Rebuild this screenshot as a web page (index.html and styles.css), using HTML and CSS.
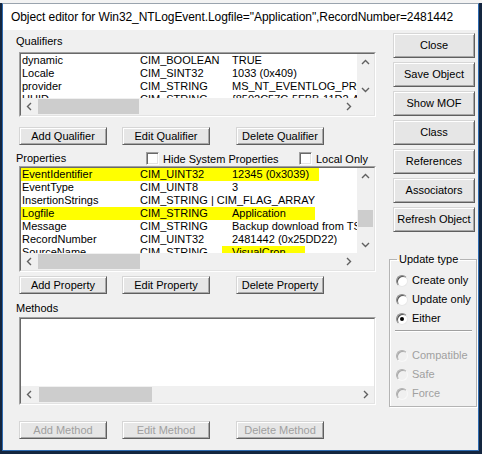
FILE: index.html
```html
<!DOCTYPE html>
<html>
<head>
<meta charset="utf-8">
<link rel="stylesheet" href="styles.css">
</head>
<body>
<div class="window">
  <div class="titlebar">Object editor for Win32_NTLogEvent.Logfile="Application",RecordNumber=2481442</div>
  <div class="client">
    <div class="main">
      <div class="label lbl-q">Qualifiers</div>
      <div class="list list-q">
        <div class="list-in">
          <div class="rows">
            <div class="row"><span class="c1">dynamic</span><span class="c2">CIM_BOOLEAN</span><span class="c3">TRUE</span></div>
            <div class="row"><span class="c1">Locale</span><span class="c2">CIM_SINT32</span><span class="c3">1033 (0x409)</span></div>
            <div class="row"><span class="c1">provider</span><span class="c2">CIM_STRING</span><span class="c3">MS_NT_EVENTLOG_PROVIDER</span></div>
            <div class="row"><span class="c1">UUID</span><span class="c2">CIM_STRING</span><span class="c3">{8502C57C-5FBB-11D2-AAC1-006008C78BC7}</span></div>
          </div>
          <div class="vscroll">
            <div class="arrow"><svg width="17" height="17" viewBox="0 0 17 17"><polyline points="5,10 8.5,6.5 12,10" fill="none" stroke="#606060" stroke-width="1.4"/></svg></div>
            <div class="track"></div>
            <div class="arrow"><svg width="17" height="17" viewBox="0 0 17 17"><polyline points="5,7 8.5,10.5 12,7" fill="none" stroke="#606060" stroke-width="1.4"/></svg></div>
          </div>
          <div class="hscroll">
            <div class="arrow"><svg width="17" height="17" viewBox="0 0 17 17"><polyline points="10,5 6.5,8.5 10,12" fill="none" stroke="#606060" stroke-width="1.4"/></svg></div>
            <div class="hthumb thumb-q"></div>
            <div class="track"></div>
            <div class="arrow"><svg width="17" height="17" viewBox="0 0 17 17"><polyline points="7,5 10.5,8.5 7,12" fill="none" stroke="#606060" stroke-width="1.4"/></svg></div>
          </div>
          <div class="corner"></div>
        </div>
      </div>
      <div class="btnrow btnrow-q">
        <div class="btn">Add Qualifier</div>
        <div class="btn">Edit Qualifier</div>
        <div class="btn">Delete Qualifier</div>
      </div>
      <div class="hdr">
        <div class="label lbl-p">Properties</div>
        <div class="cbitem cb-hide"><span class="cbox"></span><span>Hide System Properties</span></div>
        <div class="cbitem"><span class="cbox"></span><span>Local Only</span></div>
      </div>
      <div class="list list-p">
        <div class="list-in">
          <div class="rows">
            <div class="row hl-a"><span class="c1">EventIdentifier</span><span class="c2">CIM_UINT32</span><span class="c3">12345 (0x3039)</span></div>
            <div class="row"><span class="c1">EventType</span><span class="c2">CIM_UINT8</span><span class="c3">3</span></div>
            <div class="row"><span class="c1">InsertionStrings</span><span class="c2">CIM_STRING | CIM_FLAG_ARRAY</span><span class="c3"></span></div>
            <div class="row hl-b"><span class="c1">Logfile</span><span class="c2">CIM_STRING</span><span class="c3">Application</span></div>
            <div class="row"><span class="c1">Message</span><span class="c2">CIM_STRING</span><span class="c3">Backup download from TSI server</span></div>
            <div class="row"><span class="c1">RecordNumber</span><span class="c2">CIM_UINT32</span><span class="c3">2481442 (0x25DD22)</span></div>
            <div class="row hl-c"><span class="c1">SourceName</span><span class="c2">CIM_STRING</span><span class="c3">VisualCron</span></div>
          </div>
          <div class="vscroll">
            <div class="arrow"><svg width="17" height="17" viewBox="0 0 17 17"><polyline points="5,10 8.5,6.5 12,10" fill="none" stroke="#606060" stroke-width="1.4"/></svg></div>
            <div class="track vtrack-p"><div class="vthumb"></div></div>
            <div class="arrow"><svg width="17" height="17" viewBox="0 0 17 17"><polyline points="5,7 8.5,10.5 12,7" fill="none" stroke="#606060" stroke-width="1.4"/></svg></div>
          </div>
          <div class="hscroll">
            <div class="arrow"><svg width="17" height="17" viewBox="0 0 17 17"><polyline points="10,5 6.5,8.5 10,12" fill="none" stroke="#606060" stroke-width="1.4"/></svg></div>
            <div class="hthumb thumb-p"></div>
            <div class="track"></div>
            <div class="arrow"><svg width="17" height="17" viewBox="0 0 17 17"><polyline points="7,5 10.5,8.5 7,12" fill="none" stroke="#606060" stroke-width="1.4"/></svg></div>
          </div>
          <div class="corner"></div>
        </div>
      </div>
      <div class="btnrow btnrow-p">
        <div class="btn">Add Property</div>
        <div class="btn">Edit Property</div>
        <div class="btn">Delete Property</div>
      </div>
      <div class="label lbl-m">Methods</div>
      <div class="list list-m">
        <div class="list-in list-in-m">
          <div class="rows"></div>
          <div class="hscroll">
            <div class="arrow"><svg width="17" height="17" viewBox="0 0 17 17"><polyline points="10,5 6.5,8.5 10,12" fill="none" stroke="#606060" stroke-width="1.4"/></svg></div>
            <div class="hthumb thumb-m"></div>
            <div class="track"></div>
            <div class="arrow"><svg width="17" height="17" viewBox="0 0 17 17"><polyline points="7,5 10.5,8.5 7,12" fill="none" stroke="#606060" stroke-width="1.4"/></svg></div>
          </div>
        </div>
      </div>
      <div class="btnrow btnrow-m">
        <div class="btn disabled">Add Method</div>
        <div class="btn disabled">Edit Method</div>
        <div class="btn disabled">Delete Method</div>
      </div>
    </div>
    <div class="side">
      <div class="btn sbtn">Close</div>
      <div class="btn sbtn">Save Object</div>
      <div class="btn sbtn">Show MOF</div>
      <div class="btn sbtn">Class</div>
      <div class="btn sbtn">References</div>
      <div class="btn sbtn">Associators</div>
      <div class="btn sbtn">Refresh Object</div>
      <fieldset class="group">
        <legend>Update type</legend>
        <div class="radio r-first"><span class="rdot"></span><span>Create only</span></div>
        <div class="radio"><span class="rdot"></span><span>Update only</span></div>
        <div class="radio"><span class="rdot checked"></span><span>Either</span></div>
        <div class="sep"></div>
        <div class="radio dis r-dis1"><span class="rdot"></span><span>Compatible</span></div>
        <div class="radio dis"><span class="rdot"></span><span>Safe</span></div>
        <div class="radio dis"><span class="rdot"></span><span>Force</span></div>
      </fieldset>
    </div>
  </div>
</div>
</body>
</html>
```

FILE: styles.css
```css
html, body {
  margin: 0;
  padding: 0;
}
body {
  width: 482px;
  height: 454px;
  overflow: hidden;
  background: linear-gradient(#f3f3f3 0 3px, #14263f 3px);
  font-family: "Liberation Sans", Arial, sans-serif;
  font-size: 11px;
  color: #000;
}
.window {
  margin: 3px 0 0 2px;
  width: 475px;
  height: 446px;
  border: 1px solid #2f6bb0;
  border-top-color: #9aa4ae;
  background: #f0f0f0;
  display: flex;
  flex-direction: column;
}
.titlebar {
  height: 26px;
  line-height: 26px;
  background: #fff;
  padding-left: 8px;
  font-size: 12px;
  letter-spacing: -0.07px;
  white-space: nowrap;
  overflow: hidden;
}
.client {
  display: flex;
  flex: 1;
}
.main {
  width: 373px;
  margin-left: 13px;
  display: flex;
  flex-direction: column;
}
.label {
  line-height: 13px;
  height: 13px;
  white-space: nowrap;
}
.lbl-q { margin-top: 5px; }
.lbl-m { margin-top: 8px; }

.list {
  margin-left: 3px;
  width: 355px;
  border: 1px solid;
  border-color: #a0a0a0 #fff #fff #a0a0a0;
}
.list-in {
  height: 100%;
  box-sizing: border-box;
  border: 1px solid;
  border-color: #696969 #e3e3e3 #e3e3e3 #696969;
  background: #fff;
  display: grid;
  grid-template-columns: 1fr 17px;
  grid-template-rows: 1fr 17px;
  overflow: hidden;
}
.list-in-m {
  grid-template-columns: 1fr;
}
.list-q { margin-top: 4px; height: 63px; }
.list-p { margin-top: 1px; height: 104px; }
.list-m { margin-top: 2px; height: 86px; }

.rows {
  overflow: hidden;
  min-width: 0;
  min-height: 0;
}
.row {
  display: flex;
  height: 13px;
  line-height: 13px;
  white-space: nowrap;
  padding-left: 1px;
}
.c1 { width: 118px; flex: none; }
.c2 { width: 92px; flex: none; overflow: visible; }
.c3 { flex: none; }
.hl-a { background: linear-gradient(to right, #ffff00 0 298px, transparent 298px); }
.hl-b { background: linear-gradient(to right, #ffff00 0 294px, transparent 294px); }
.hl-c { background: linear-gradient(to right, transparent 0 201px, #ffff00 201px 284px, transparent 284px); }

.vscroll {
  background: #f0f0f0;
  display: flex;
  flex-direction: column;
}
.hscroll {
  background: #f0f0f0;
  display: flex;
}
.arrow {
  width: 17px;
  height: 17px;
  flex: none;
}
.arrow svg { display: block; }
.track { flex: 1; }
.vtrack-p { padding-top: 25px; }
.vthumb {
  height: 17px;
  margin: 0 1px;
  background: #cdcdcd;
}
.hthumb {
  margin: 1px 0;
  background: #cdcdcd;
  flex: none;
}
.thumb-q { width: 101px; }
.thumb-p { width: 102px; }
.thumb-m { width: 113px; margin-left: 1px; }
.corner { background: #f0f0f0; }

.btnrow {
  display: flex;
  margin-left: 3px;
}
.btnrow .btn { width: 88px; height: 18px; }
.btnrow .btn + .btn { margin-left: 15px; }
.btnrow .btn + .btn + .btn { margin-left: 26px; }
.btnrow-q { margin-top: 10px; }
.btnrow-p { margin-top: 4px; }
.btnrow-m { margin-top: 16px; }

.btn {
  box-sizing: border-box;
  display: flex;
  align-items: center;
  justify-content: center;
  white-space: nowrap;
  line-height: 13px;
  background: #e6e6e6;
  border: 1px solid;
  border-color: #d6d6d6 #5f5f5f #5f5f5f #d6d6d6;
  box-shadow: inset 1px 1px #fff, inset -1px -1px #a8a8a8;
}
.btn.disabled { color: #a0a0a0; }

.hdr {
  display: flex;
  align-items: center;
  height: 13px;
  margin-top: 7px;
}
.lbl-p { width: 130px; flex: none; }
.cbitem {
  display: flex;
  align-items: center;
  white-space: nowrap;
}
.cb-hide { width: 153px; flex: none; }
.cbox {
  width: 13px;
  height: 13px;
  box-sizing: border-box;
  background: #fff;
  border: 1px solid;
  border-color: #a0a0a0 #fff #fff #a0a0a0;
  box-shadow: inset 1px 1px #696969, inset -1px -1px #e3e3e3;
  margin-right: 4px;
  flex: none;
}

.side {
  width: 88px;
  display: flex;
  flex-direction: column;
}
.sbtn {
  margin-left: 4px;
  width: 82px;
  height: 25px;
  margin-top: 4px;
}
.sbtn:first-child { margin-top: 3px; }

.group {
  margin: 21px 0 0 0;
  padding: 0 0 6px 0;
  border: 1px solid #b4b4b4;
  box-shadow: 1px 1px #fff, inset 1px 1px #fff;
  min-width: 0;
}
.group legend {
  margin-left: 7px;
  padding: 0 2px;
  line-height: 13px;
}
.radio {
  display: flex;
  align-items: center;
  height: 13px;
  line-height: 13px;
  padding-left: 6px;
  margin-top: 6px;
  white-space: nowrap;
}
.radio.r-first { margin-top: 8px; }
.radio.r-dis1 { margin-top: 17px; }
.radio.dis { color: #a0a0a0; }
.rdot {
  width: 12px;
  height: 12px;
  box-sizing: border-box;
  border-radius: 50%;
  background: #fff;
  border: 1px solid;
  border-color: #8a8a8a #e8e8e8 #e8e8e8 #8a8a8a;
  box-shadow: inset 1px 1px #555;
  margin-right: 4px;
  flex: none;
  display: flex;
  align-items: center;
  justify-content: center;
}
.radio.dis .rdot {
  background: #f0f0f0;
  border-color: #b0b0b0 #f8f8f8 #f8f8f8 #b0b0b0;
  box-shadow: inset 1px 1px #a8a8a8;
}
.rdot.checked::after {
  content: "";
  width: 4px;
  height: 4px;
  border-radius: 50%;
  background: #000;
}
.sep {
  margin: 5px 4px 0 5px;
  height: 1px;
  background: #a0a0a0;
  border-bottom: 1px solid #fff;
}
```
